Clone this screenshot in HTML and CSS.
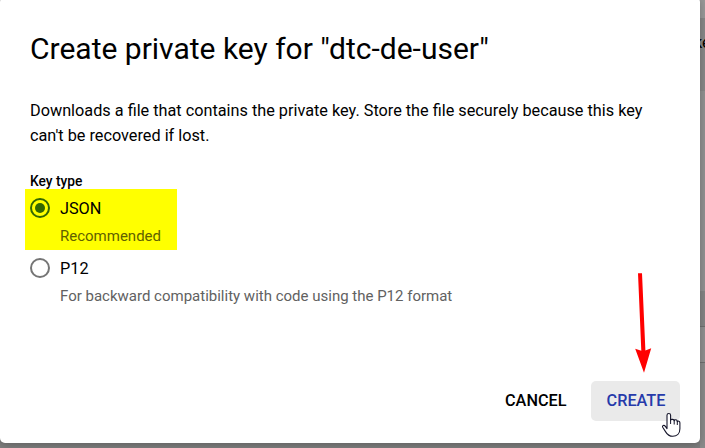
FILE: index.html
```html
<!DOCTYPE html>
<html lang="en">
<head>
<meta charset="utf-8">
<title>Create private key</title>
<link rel="stylesheet" href="styles.css">
</head>
<body>
<div class="backdrop">
  <main class="dialog">
    <h1 class="title">Create private key for "dtc-de-user"</h1>
    <p class="description">Downloads a file that contains the private key. Store the file securely because this key can't be recovered if lost.</p>
    <div class="group-label">Key type</div>
    <div class="options">
      <div class="option selected">
        <span class="radio"></span>
        <div class="option-text"><div class="option-name">JSON</div><div class="hint">Recommended</div></div>
      </div>
      <div class="option">
        <span class="radio"></span>
        <div class="option-text"><div class="option-name">P12</div><div class="hint">For backward compatibility with code using the P12 format</div></div>
      </div>
    </div>
    <div class="actions">
      <button class="button cancel">CANCEL</button>
      <button class="button create">CREATE</button>
    </div>
  </main>
  <aside class="page-edge">
    <div class="edge-top"></div>
    <div class="edge-bar"><span class="edge-text">ke</span></div>
    <div class="edge-body"></div>
    <div class="edge-row"></div>
    <div class="edge-row last"></div>
    <div class="edge-end"></div>
  </aside>
  <svg class="overlay" viewBox="0 0 705 448">
    <path d="M638 273.2H642L645.4 350.5L651.2 348.2L644 372.8L635.2 348.8L641.3 350.7Z" fill="#f00"/>
    <path d="M667 428.6V415.3C667 412.9 670.6 412.9 670.6 415.3V420.2C671 418.8 674.2 419.2 674.2 420.7C674.8 419.2 677.3 419.6 677.3 421.6C678 420.5 679.9 421.1 679.9 422.8V428.7C679.9 433.6 676.8 436.3 672.8 436.3C669.2 436.3 667.1 434.3 665.5 431.6L662.7 427.3C661.8 425.6 664.1 424.7 665.2 426.2Z" fill="#fff" stroke="#15152a" stroke-width="1.1" stroke-linejoin="round"/>
    <path d="M670.6 419V424M674.2 420V424.5M677.3 421V425" fill="none" stroke="#15152a" stroke-width="1"/>
  </svg>
</div>
</body>
</html>
```
FILE: styles.css
```css
* { box-sizing: border-box; }
body { margin: 0; overflow: hidden; font-family: Roboto, sans-serif; color: #000; }
.backdrop { position: relative; width: 705px; height: 448px; display: flex; align-items: flex-start; background: #7f7f7f; overflow: hidden; }
.dialog { position: relative; z-index: 1; width: 700px; height: 446px; margin-top: -3px; flex: none; display: flex; flex-direction: column; padding: 32px 30px 22px; background: #fff; border-radius: 5px; box-shadow: 0 2px 8px rgba(0,0,0,.25); }
.title { margin: 0; font-size: 30px; font-weight: 400; line-height: 40px; white-space: nowrap; }
.description { margin: 29px 0 0; font-size: 16.25px; line-height: 25px; }
.group-label { margin-top: 24px; font-size: 13.75px; font-weight: 500; line-height: 18px; }
.options { margin-left: -5px; }
.option { display: flex; width: fit-content; height: 60px; padding: 8px 0 0 5px; }
.option.selected { width: 152px; height: 61px; padding-top: 9px; background: #ff0; margin-top: -1px; }
.radio { display: flex; flex: none; align-items: center; justify-content: center; width: 20px; height: 20px; border: 2px solid #757575; border-radius: 50%; }
.selected .radio { border-color: #336800; }
.selected .radio::after { content: ""; width: 10px; height: 10px; border-radius: 50%; background: #336800; }
.option-text { margin-left: 10px; }
.option-name { font-size: 16.25px; line-height: 22px; }
.hint { margin-top: 6px; font-size: 15px; line-height: 20px; color: #616161; white-space: nowrap; }
.selected .hint { color: #616100; }
.actions { display: flex; justify-content: flex-end; gap: 10px; margin-top: auto; margin-right: -10px; }
.button { height: 40px; padding: 0 14.5px 0 15.5px; border: 0; border-radius: 5px; background: none; font: 500 16.25px/40px Roboto, sans-serif; color: #000; }
.create { width: 89px; background: #eaeaea; color: #263aaa; }
.page-edge { width: 5px; flex: none; overflow: hidden; }
.edge-top { height: 18px; background: #999; }
.edge-bar { height: 73px; padding-top: 15px; background: #888; }
.edge-text { display: block; margin-left: -6px; font-size: 16.25px; line-height: 20px; }
.edge-body { height: 200px; background: #929292; }
.edge-row { height: 36px; background: #858585; border-bottom: 1px solid #6f6f6f; }
.edge-row.last { background: #919191; }
.edge-end { height: 85px; background: #8b8b8b; }
.overlay { position: absolute; z-index: 2; inset: 0; width: 705px; height: 448px; pointer-events: none; }
```
